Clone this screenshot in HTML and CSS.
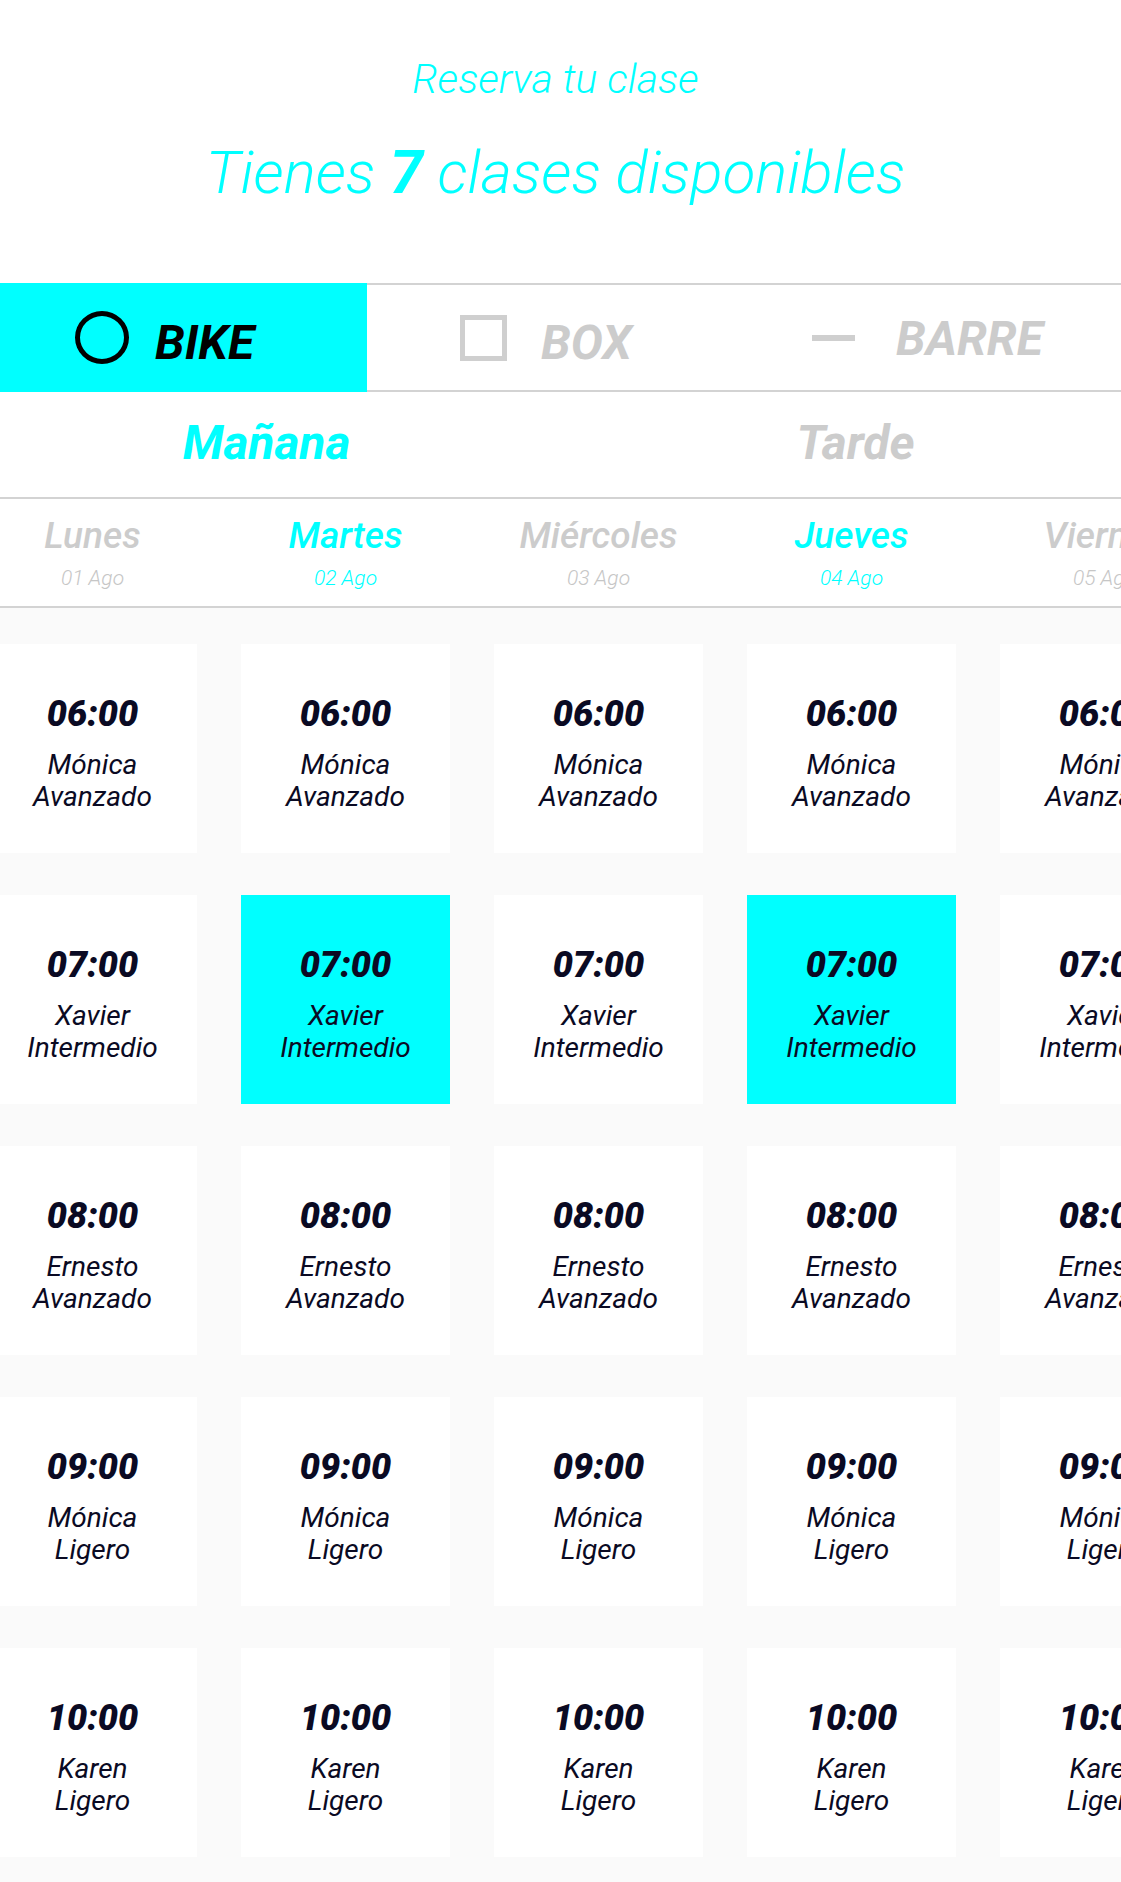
FILE: index.html
```html
<!DOCTYPE html>
<html lang="es">
<head>
    <meta charset="UTF-8">
    <meta name="viewport" content="width=device-width, initial-scale=1.0">
    <title>Reserva tu clase</title>
    <link rel="stylesheet" href="styles.css">
</head>
<body>
    <div class="header">
        <h2 class="subtitle">Reserva tu clase</h2>
        <h1 class="title">Tienes <b>7</b> clases disponibles</h1>
    </div>

    <!-- Disciplinas -->
    <div class="tabs">
        <div class="tab tab-bike tab-active">
            <span class="icon-circle"></span>
            <span class="tab-label">BIKE</span>
        </div>
        <div class="tab tab-box">
            <span class="icon-square"></span>
            <span class="tab-label">BOX</span>
        </div>
        <div class="tab tab-barre">
            <span class="icon-dash"></span>
            <span class="tab-label">BARRE</span>
        </div>
    </div>

    <div class="periods">
        <div class="period active">Mañana</div>
        <div class="period">Tarde</div>
    </div>

    <!-- Dias -->
    <div class="days-row">
        <div class="days">
            <div class="day"><div class="day-name">Lunes</div><div class="day-date">01 Ago</div></div>
            <div class="day active"><div class="day-name">Martes</div><div class="day-date">02 Ago</div></div>
            <div class="day"><div class="day-name">Miércoles</div><div class="day-date">03 Ago</div></div>
            <div class="day active"><div class="day-name">Jueves</div><div class="day-date">04 Ago</div></div>
            <div class="day"><div class="day-name">Viernes</div><div class="day-date">05 Ago</div></div>
        </div>
    </div>

    <!-- Clases -->
    <div class="schedule">
        <div class="cards">
            <div class="card"><div class="time">06:00</div><div class="coach">Mónica</div><div class="level">Avanzado</div></div>
            <div class="card"><div class="time">06:00</div><div class="coach">Mónica</div><div class="level">Avanzado</div></div>
            <div class="card"><div class="time">06:00</div><div class="coach">Mónica</div><div class="level">Avanzado</div></div>
            <div class="card"><div class="time">06:00</div><div class="coach">Mónica</div><div class="level">Avanzado</div></div>
            <div class="card"><div class="time">06:00</div><div class="coach">Mónica</div><div class="level">Avanzado</div></div>

            <div class="card"><div class="time">07:00</div><div class="coach">Xavier</div><div class="level">Intermedio</div></div>
            <div class="card selected"><div class="time">07:00</div><div class="coach">Xavier</div><div class="level">Intermedio</div></div>
            <div class="card"><div class="time">07:00</div><div class="coach">Xavier</div><div class="level">Intermedio</div></div>
            <div class="card selected"><div class="time">07:00</div><div class="coach">Xavier</div><div class="level">Intermedio</div></div>
            <div class="card"><div class="time">07:00</div><div class="coach">Xavier</div><div class="level">Intermedio</div></div>

            <div class="card"><div class="time">08:00</div><div class="coach">Ernesto</div><div class="level">Avanzado</div></div>
            <div class="card"><div class="time">08:00</div><div class="coach">Ernesto</div><div class="level">Avanzado</div></div>
            <div class="card"><div class="time">08:00</div><div class="coach">Ernesto</div><div class="level">Avanzado</div></div>
            <div class="card"><div class="time">08:00</div><div class="coach">Ernesto</div><div class="level">Avanzado</div></div>
            <div class="card"><div class="time">08:00</div><div class="coach">Ernesto</div><div class="level">Avanzado</div></div>

            <div class="card"><div class="time">09:00</div><div class="coach">Mónica</div><div class="level">Ligero</div></div>
            <div class="card"><div class="time">09:00</div><div class="coach">Mónica</div><div class="level">Ligero</div></div>
            <div class="card"><div class="time">09:00</div><div class="coach">Mónica</div><div class="level">Ligero</div></div>
            <div class="card"><div class="time">09:00</div><div class="coach">Mónica</div><div class="level">Ligero</div></div>
            <div class="card"><div class="time">09:00</div><div class="coach">Mónica</div><div class="level">Ligero</div></div>

            <div class="card"><div class="time">10:00</div><div class="coach">Karen</div><div class="level">Ligero</div></div>
            <div class="card"><div class="time">10:00</div><div class="coach">Karen</div><div class="level">Ligero</div></div>
            <div class="card"><div class="time">10:00</div><div class="coach">Karen</div><div class="level">Ligero</div></div>
            <div class="card"><div class="time">10:00</div><div class="coach">Karen</div><div class="level">Ligero</div></div>
            <div class="card"><div class="time">10:00</div><div class="coach">Karen</div><div class="level">Ligero</div></div>
        </div>
    </div>
</body>
</html>
```

FILE: styles.css
```css
html, body {
    font-family: Roboto, "Liberation Sans", sans-serif;
    background-color: #fff;
    margin: 0;
    padding: 0;
    overflow-x: hidden;
}
.header {
    text-align: center;
    padding: 55px 10px 0 0;
}
.subtitle {
    margin: 0;
    font-size: 41px;
    font-weight: 300;
    font-style: italic;
    line-height: 48px;
    color: #00ffff;
}
.title {
    margin: 36px 0 0;
    font-size: 60px;
    font-weight: 300;
    font-style: italic;
    line-height: 68px;
    color: #00ffff;
}
.title b {
    font-weight: 700;
}
.tabs {
    display: flex;
    margin-top: 76px;
}
.tab {
    display: flex;
    align-items: center;
    box-sizing: border-box;
    height: 109px;
    border-top: 2px solid #d3d3d3;
    border-bottom: 2px solid #d3d3d3;
    color: #cccccc;
}
.tab-active {
    background-color: #00ffff;
    border-color: #00ffff;
    color: #000;
}
.tab-bike {
    width: 367px;
    padding-left: 75px;
    gap: 26px;
}
.tab-box {
    width: 367px;
    padding-left: 93px;
    gap: 34px;
}
.tab-barre {
    flex: 1;
    padding-left: 78px;
    gap: 41px;
}
.tab-label {
    font-size: 48px;
    font-weight: 700;
    font-style: italic;
    line-height: 48px;
    padding-top: 10px;
}
.tab-barre .tab-label {
    padding-top: 2px;
}
.icon-circle {
    width: 44px;
    height: 43px;
    border: 5px solid #000;
    border-radius: 50%;
}
.icon-square {
    width: 37px;
    height: 36px;
    border: 5px solid #cfcfcf;
}
.icon-dash {
    width: 43px;
    height: 6px;
    background-color: #cfcfcf;
}
.periods {
    display: flex;
    align-items: center;
    height: 107px;
    padding-bottom: 5px;
    margin: 0 -29px 0 -28px;
    border-bottom: 2px solid #d3d3d3;
    box-sizing: border-box;
}
.period {
    flex: 1;
    text-align: center;
    font-size: 48px;
    font-weight: 700;
    font-style: italic;
    color: #cccccc;
}
.period.active {
    color: #00ffff;
}
.days-row {
    border-bottom: 2px solid #d3d3d3;
}
.days, .cards {
    display: grid;
    grid-template-columns: repeat(5, 209px);
    column-gap: 44px;
    margin-left: -12px;
}
.days {
    padding: 16px 0;
}
.day {
    text-align: center;
    font-style: italic;
    color: #cccccc;
}
.day-name {
    font-size: 37px;
    font-weight: 500;
    line-height: 41px;
    white-space: nowrap;
}
.day-date {
    margin-top: 10px;
    font-size: 21px;
    font-weight: 300;
    line-height: 24px;
    white-space: nowrap;
    color: #c6c6c6;
}
.day.active, .day.active .day-date {
    color: #00ffff;
}
.schedule {
    background-color: #fafafa;
    padding: 36px 0 25px;
}
.cards {
    grid-auto-rows: 209px;
    row-gap: 42px;
}
.card {
    display: flex;
    flex-direction: column;
    justify-content: center;
    box-sizing: border-box;
    padding-top: 8px;
    background-color: #fff;
    text-align: center;
    font-style: italic;
    color: #0a0a23;
}
.card.selected {
    background-color: #00ffff;
}
.time {
    font-size: 36px;
    font-weight: 900;
    line-height: 44px;
    margin-bottom: 13px;
}
.coach, .level {
    font-size: 28px;
    line-height: 32px;
    white-space: nowrap;
}
```
